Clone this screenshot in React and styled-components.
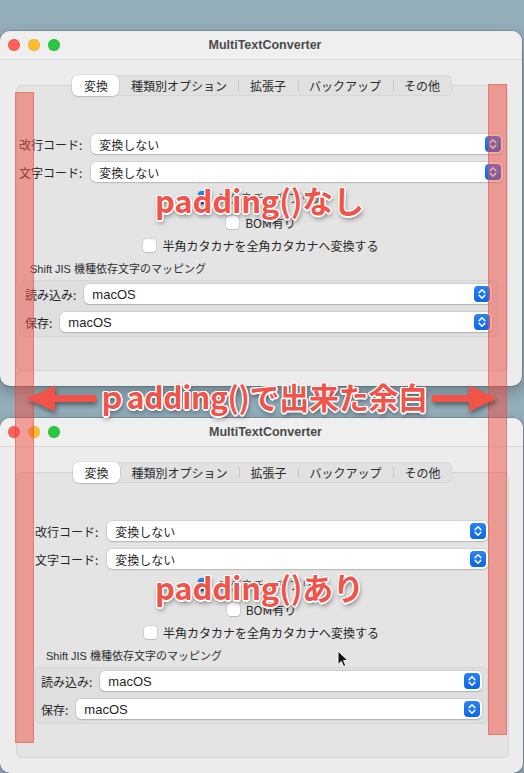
import React from "react";
import styled, { createGlobalStyle } from "styled-components";

const Global = createGlobalStyle`
  html, body { margin: 0; padding: 0; background: #93adbb; }
  * { box-sizing: border-box; }
`;

const UI_FONT = `"Liberation Sans", "Noto Sans CJK JP", sans-serif`;

const Desktop = styled.div`
  position: relative;
  width: 524px;
  height: 773px;
  overflow: hidden;
  background: #94aebc;
  display: flex;
  flex-direction: column;
  padding-top: 31px;
  gap: 32px;
  font-family: ${UI_FONT};
  color: #262626;
`;

const Window = styled.div`
  flex: none;
  width: ${(p) => p.$w}px;
  height: 355px;
  background: #ececec;
  border-radius: 10px;
  box-shadow: 0 0 0 0.5px rgba(0, 0, 0, 0.3), 0 6px 16px rgba(0, 0, 0, 0.28);
  display: flex;
  flex-direction: column;
  overflow: hidden;
`;

const TitleBar = styled.div`
  flex: none;
  height: 29px;
  background: #efeff0;
  border-bottom: 1px solid #d9d9d9;
  display: grid;
  grid-template-columns: 1fr auto 1fr;
  align-items: center;
  padding-left: 8px;
`;

const Lights = styled.div`
  display: flex;
  gap: 8px;
`;

const Light = styled.span`
  width: 12px;
  height: 12px;
  border-radius: 50%;
  background: ${(p) => p.$c};
  box-shadow: inset 0 0 0 0.5px rgba(0, 0, 0, 0.12);
`;

const Title = styled.div`
  font-family: "Liberation Sans", sans-serif;
  font-weight: 700;
  font-size: 12.5px;
  color: #4b4b4b;
`;

const Body = styled.div`
  flex: 1;
  display: flex;
  flex-direction: column;
  padding: 15px 14px 15px 16px;
`;

const Segmented = styled.div`
  position: relative;
  z-index: 1;
  align-self: center;
  display: flex;
  align-items: center;
  height: 21px;
  border-radius: 6px;
  background: #e1e1e2;
  box-shadow: inset 0 0 0 0.5px rgba(0, 0, 0, 0.08);
  font-family: "Noto Sans CJK JP", sans-serif;
  font-size: 12px;
  color: #2a2a2a;
`;

const Tab = styled.div`
  position: relative;
  height: 21px;
  display: flex;
  align-items: center;
  padding: 0 11.5px;
  white-space: nowrap;
  ${(p) =>
    p.$active &&
    `
    background: #ffffff;
    border-radius: 6px;
    box-shadow: 0 0 0 0.5px rgba(0,0,0,0.12), 0 1px 1.5px rgba(0,0,0,0.12);
  `}
  ${(p) =>
    p.$sep &&
    `
    &::before {
      content: "";
      position: absolute;
      left: 0;
      top: 5px;
      height: 11px;
      width: 1px;
      background: #c9c9cb;
    }
  `}
`;

const GroupBox = styled.div`
  flex: 1;
  margin-top: -11px;
  background: #e4e4e5;
  border: 1px solid rgba(0, 0, 0, 0.06);
  border-radius: 6px;
  display: flex;
  flex-direction: column;
  padding: 48px ${(p) => (p.$pad ? 20 : 4)}px 0 ${(p) => (p.$pad ? 18 : 2)}px;
`;

const Row = styled.div`
  display: flex;
  align-items: center;
  gap: ${(p) => p.$gap || 9}px;
  height: 20px;
  margin-top: ${(p) => p.$mt || 0}px;
`;

const Label = styled.span`
  font-family: "Noto Sans CJK JP", sans-serif;
  font-size: 12px;
  white-space: nowrap;
  color: #262626;
`;

const Popup = styled.div`
  flex: 1;
  position: relative;
  height: 20px;
  background: #ffffff;
  border-radius: 5px;
  box-shadow: 0 0 0 0.5px rgba(0, 0, 0, 0.14), 0 1px 1.5px rgba(0, 0, 0, 0.14);
  display: flex;
  align-items: center;
  padding-left: 8px;
  font-size: ${(p) => (p.$latin ? 13 : 12)}px;
  font-family: ${UI_FONT};
  color: #1f1f1f;
`;

const Stepper = styled.span`
  position: absolute;
  right: 2px;
  top: 2px;
  width: 16px;
  height: 16px;
  border-radius: 4px;
  background: linear-gradient(#2a83f6, #0b66e4);
  display: flex;
  align-items: center;
  justify-content: center;
`;

const CheckRow = styled.div`
  align-self: center;
  display: flex;
  align-items: center;
  gap: 6px;
  height: ${(p) => p.$h || 16}px;
  margin-top: ${(p) => p.$mt}px;
  font-family: "Noto Sans CJK JP", sans-serif;
  font-size: 12px;
  color: #262626;
  white-space: nowrap;
`;

const Box = styled.span`
  width: 13px;
  height: 13px;
  border-radius: 3.5px;
  flex: none;
  display: flex;
  align-items: center;
  justify-content: center;
  background: ${(p) => (p.$on ? "linear-gradient(#2a83f6, #0b66e4)" : "#ffffff")};
  box-shadow: 0 0 0 0.5px rgba(0, 0, 0, 0.16), 0 1px 1px rgba(0, 0, 0, 0.1);
`;

const Faint = styled.span`
  color: #5a5a5a;
`;

const Caption = styled.div`
  margin-top: 8px;
  margin-left: 11px;
  height: 14px;
  display: flex;
  align-items: center;
  font-size: 11px;
  font-family: ${UI_FONT};
  color: #2e2e2e;
  white-space: nowrap;
`;

const SubBox = styled.div`
  margin-top: 5px;
  margin-right: ${(p) => (p.$pad ? 0 : 5)}px;
  background: rgba(0, 0, 0, 0.02);
  border: 1px solid rgba(0, 0, 0, 0.045);
  border-radius: 5px;
  padding: 3px 5px 4px 5px;
  display: flex;
  flex-direction: column;
  gap: 8px;
`;

/* overlays */
const Bar = styled.div`
  position: absolute;
  left: ${(p) => p.$x}px;
  top: ${(p) => p.$y}px;
  width: 19px;
  height: ${(p) => p.$h}px;
  background: rgba(240, 78, 66, 0.5);
  box-shadow: inset 0 0 0 1px rgba(230, 60, 50, 0.35);
  pointer-events: none;
`;

const Callout = styled.div`
  position: absolute;
  left: ${(p) => p.$x}px;
  top: ${(p) => p.$y}px;
  font-family: "Noto Sans CJK JP", sans-serif;
  font-weight: 700;
  font-size: ${(p) => p.$size}px;
  line-height: 1;
  letter-spacing: ${(p) => p.$ls || 0}px;
  color: #f1534a;
  white-space: nowrap;
  text-shadow:
    1.5px 0 0 #fff, -1.5px 0 0 #fff, 0 1.5px 0 #fff, 0 -1.5px 0 #fff,
    1px 1px 0 #fff, -1px -1px 0 #fff, 1px -1px 0 #fff, -1px 1px 0 #fff,
    1px 3px 5px rgba(0, 0, 0, 0.55);
`;

const ArrowLayer = styled.svg`
  position: absolute;
  left: 0;
  top: 380px;
  overflow: visible;
`;

const Cursor = styled.svg`
  position: absolute;
  left: 337px;
  top: 650px;
`;

const Chevrons = () => (
  <svg width="8" height="12" viewBox="0 0 8 12">
    <path d="M1.2 4.6 L4 1.8 L6.8 4.6 M1.2 7.4 L4 10.2 L6.8 7.4" fill="none" stroke="#fff" strokeWidth="1.5" strokeLinecap="round" strokeLinejoin="round" />
  </svg>
);

const Check = () => (
  <svg width="9" height="9" viewBox="0 0 9 9">
    <path d="M1.5 4.8 L3.6 6.9 L7.6 1.9" fill="none" stroke="#fff" strokeWidth="1.6" strokeLinecap="round" strokeLinejoin="round" />
  </svg>
);

const tabs = ["変換", "種類別オプション", "拡張子", "バックアップ", "その他"];

function AppWindow({ pad, width }) {
  return (
    <Window $w={width}>
      <TitleBar>
        <Lights>
          <Light $c="#fe5f57" />
          <Light $c="#febc2e" />
          <Light $c="#28c840" />
        </Lights>
        <Title>MultiTextConverter</Title>
        <span />
      </TitleBar>
      <Body>
        <Segmented>
          {tabs.map((t, i) => (
            <Tab key={t} $active={i === 0} $sep={i > 1}>
              {t}
            </Tab>
          ))}
        </Segmented>
        <GroupBox $pad={pad}>
          <Row>
            <Label>改行コード:</Label>
            <Popup>
              変換しない
              <Stepper><Chevrons /></Stepper>
            </Popup>
          </Row>
          <Row $mt={8}>
            <Label>文字コード:</Label>
            <Popup>
              変換しない
              <Stepper><Chevrons /></Stepper>
            </Popup>
          </Row>
          <CheckRow $mt={8} $h={14}>
            <Box $on><Check /></Box>
            <Faint>シグネチャをプリア</Faint>
          </CheckRow>
          <CheckRow $mt={10}>
            <Box />
            BOM有り
          </CheckRow>
          <CheckRow $mt={7}>
            <Box />
            半角カタカナを全角カタカナへ変換する
          </CheckRow>
          <Caption>Shift JIS 機種依存文字のマッピング</Caption>
          <SubBox $pad={pad}>
            <Row $gap={8}>
              <Label>読み込み:</Label>
              <Popup $latin>
                macOS
                <Stepper><Chevrons /></Stepper>
              </Popup>
            </Row>
            <Row $gap={8}>
              <Label>保存:</Label>
              <Popup $latin>
                macOS
                <Stepper><Chevrons /></Stepper>
              </Popup>
            </Row>
          </SubBox>
        </GroupBox>
      </Body>
    </Window>
  );
}

export default function App() {
  return (
    <>
      <Global />
      <Desktop>
        <AppWindow width={522} />
        <AppWindow width={523} pad />

        <Bar $x={15} $y={92} $h={651} />
        <Bar $x={488} $y={84} $h={651} />

        <ArrowLayer width="524" height="40" viewBox="0 0 524 40">
          <defs>
            <filter id="sh" x="-20%" y="-50%" width="140%" height="200%">
              <feDropShadow dx="1" dy="3" stdDeviation="2.5" floodColor="#000" floodOpacity="0.45" />
            </filter>
          </defs>
          <g filter="url(#sh)" fill="#f1534a">
            <path d="M27 18.5 L55 5.5 L55 15 L96 15 L96 22 L55 22 L55 31.5 Z" />
            <path d="M497 18.5 L469 5.5 L469 15 L432 15 L432 22 L469 22 L469 31.5 Z" />
          </g>
        </ArrowLayer>

        <Callout $x={155} $y={184} $size={31} $ls={-0.2}>padding()なし</Callout>
        <Callout $x={97} $y={381} $size={30} $ls={-0.3}>ｐadding()で出来た余白</Callout>
        <Callout $x={155} $y={571} $size={31} $ls={-0.2}>padding()あり</Callout>

        <Cursor width="12" height="18" viewBox="0 0 12 18">
          <path d="M1 1 L1 14.5 L4.3 11.4 L6.6 16.6 L8.8 15.6 L6.6 10.6 L11 10.6 Z" fill="#111" stroke="#fff" strokeWidth="1" strokeLinejoin="round" />
        </Cursor>
      </Desktop>
    </>
  );
}
